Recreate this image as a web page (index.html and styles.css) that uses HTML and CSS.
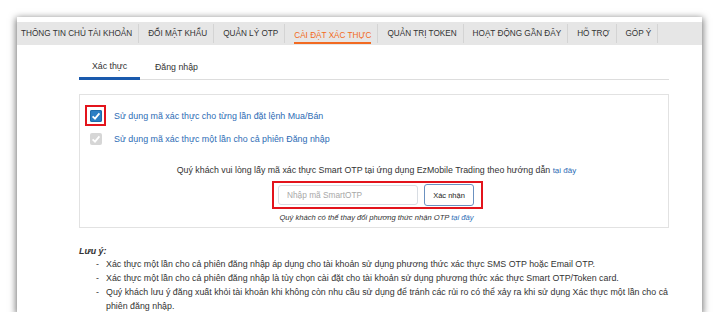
FILE: index.html
```html
<!DOCTYPE html>
<html>
  <head>
    <meta charset="UTF-8">
    <title>Cài đặt xác thực</title>
    <link rel="stylesheet" href="styles.css">
  </head>
  <body>
  <div class=window>
    <div class=tabs>
      <div class=tab>THÔNG TIN CHỦ TÀI KHOẢN</div>
      <div class=tab>ĐỔI MẬT KHẨU</div>
      <div class=tab>QUẢN LÝ OTP</div>
      <div class="tab active"><span>CÀI ĐẶT XÁC THỰC</span></div>
      <div class=tab>QUẢN TRỊ TOKEN</div>
      <div class=tab>HOẠT ĐỘNG GẦN ĐÂY</div>
      <div class=tab>HỖ TRỢ</div>
      <div class=tab>GÓP Ý</div>
    </div>

    <div class=content>
      <div class=subtabs>
        <div class="subtab active">Xác thực</div>
        <div class=subtab>Đăng nhập</div>
      </div>

      <div class=box>
        <div class=option>
          <span class=mark><span class="check on"><svg viewBox="0 0 12 12"><path d="M2.6 6.3 L5 8.6 L9.4 3.4" /></svg></span></span>
          <span class=label>Sử dụng mã xác thực cho từng lần đặt lệnh Mua/Bán</span>
        </div>
        <div class="option second">
          <span class=nomark><span class="check off"><svg viewBox="0 0 12 12"><path d="M2.6 6.3 L5 8.6 L9.4 3.4" /></svg></span></span>
          <span class=label>Sử dụng mã xác thực một lần cho cả phiên Đăng nhập</span>
        </div>

        <p class=hint>Quý khách vui lòng lấy mã xác thực Smart OTP tại ứng dụng EzMobile Trading theo hướng dẫn <a>tại đây</a></p>
        <div class=form>
          <div class=field>Nhập mã SmartOTP</div>
          <div class=btn>Xác nhận</div>
        </div>
        <p class=note>Quý khách có thể thay đổi phương thức nhận OTP <a>tại đây</a></p>
      </div>

      <div class=notes>
        <div class=title>Lưu ý:</div>
        <ul>
          <li>Xác thực một lần cho cả phiên đăng nhập áp dụng cho tài khoản sử dụng phương thức xác thực SMS OTP hoặc Email OTP.</li>
          <li>Xác thực một lần cho cả phiên đăng nhập là tùy chọn cài đặt cho tài khoản sử dụng phương thức xác thực Smart OTP/Token card.</li>
          <li>Quý khách lưu ý đăng xuất khỏi tài khoản khi không còn nhu cầu sử dụng để tránh các rủi ro có thể xảy ra khi sử dụng Xác thực một lần cho cả phiên đăng nhập.</li>
        </ul>
      </div>
    </div>
  </div>
  </body>
</html>
```

FILE: styles.css
```css
body {
  margin: 0;
  padding: 17px 18px 0 17px;
  background-color: #ffffff;
  font-family: "Liberation Sans", Arial, sans-serif;
  font-size: 8.3px;
  color: #333333;
  }

.window {
  width: 685px;
  height: 295px;
  padding-top: 5px;
  box-sizing: border-box;
  overflow: hidden;
  background-color: #ffffff;
  box-shadow: 0px 2px 7px 1px rgba(0,0,0,0.55);
  }

/* top menu */
.tabs {
  display: flex;
  height: 23px;
  background-color: #e6e6e6;
  }

.tab {
  display: flex;
  align-items: center;
  padding: 0 6px 0 9px;
  border-right: 1px solid #d4d4d4;
  margin: 2px 0;
  font-size: 8.2px;
  color: #333333;
  white-space: nowrap;
  }

.tab:first-child {
  padding-left: 4px;
  }

.tab.active span {
  color: #f26a21;
  border-bottom: 2px solid #f26a21;
  padding: 4px 0 2px;
  margin-top: 3px;
  }

.content {
  padding: 0 33px 0 62px;
  }

/* sub tabs */
.subtabs {
  display: flex;
  height: 34px;
  border-bottom: 1px solid #dddddd;
  font-size: 8.8px;
  }

.subtab {
  width: 61px;
  display: flex;
  align-items: center;
  justify-content: center;
  padding-top: 10px;
  box-sizing: border-box;
  margin-right: 6px;
  }

.subtab.active {
  border-bottom: 3px solid #1a5aad;
  margin-bottom: -1px;
  }

/* settings box */
.box {
  margin-top: 14px;
  height: 134px;
  box-sizing: border-box;
  border: 1px solid #e2e2e2;
  padding: 10px 0 0 5px;
  }

.option {
  display: flex;
  align-items: center;
  height: 21px;
  }

.option.second {
  margin-top: 2px;
  }

.mark, .nomark {
  width: 17px;
  height: 17px;
  display: flex;
  align-items: center;
  justify-content: center;
  margin-right: 8px;
  border: 2px solid transparent;
  }

.mark {
  border-color: #e3141c;
  }

.check {
  width: 12px;
  height: 12px;
  border-radius: 2px;
  display: block;
  }

.check svg {
  width: 12px;
  height: 12px;
  display: block;
  fill: none;
  stroke: #ffffff;
  stroke-width: 1.8;
  }

.check.on {
  background-color: #2a7ec4;
  box-shadow: inset 0 0 0 1px #1f6aa8;
  }

.check.off {
  background-color: #d6d6d6;
  }

.label {
  font-size: 8.9px;
  color: #2d6cb5;
  }

.hint {
  margin: 15px 0 0;
  line-height: 12px;
  font-size: 8.8px;
  text-align: center;
  }

a {
  color: #2d6cb5;
  font-size: 8px;
  }

.form {
  width: 211px;
  height: 28px;
  box-sizing: border-box;
  margin: 4px 0 0 187px;
  border: 2px solid #e3141c;
  display: flex;
  align-items: center;
  padding: 0 7px 0 4px;
  gap: 6px;
  }

.field {
  width: 140px;
  height: 20px;
  box-sizing: border-box;
  border: 1px solid #d8dde3;
  border-radius: 3px;
  padding-left: 8px;
  display: flex;
  align-items: center;
  color: #a8a8a8;
  }

.btn {
  width: 50px;
  height: 22px;
  box-sizing: border-box;
  border: 1px solid #6b91c0;
  border-radius: 3px;
  display: flex;
  align-items: center;
  justify-content: center;
  font-size: 7.5px;
  color: #222222;
  }

.note {
  margin: 3px 0 0;
  line-height: 12px;
  text-align: center;
  font-style: italic;
  font-size: 7.6px;
  }

.note a {
  font-size: 7.6px;
  }

/* notes */
.notes {
  padding-top: 16px;
  margin-right: -15px;
  font-size: 8.85px;
  line-height: 14px;
  }

.title {
  font-weight: bold;
  font-style: italic;
  }

ul {
  list-style: none;
  margin: -1px 0 0;
  padding: 0;
  }

li {
  padding-left: 27px;
  position: relative;
  }

li:before {
  content: "-";
  position: absolute;
  left: 17px;
  }
```
